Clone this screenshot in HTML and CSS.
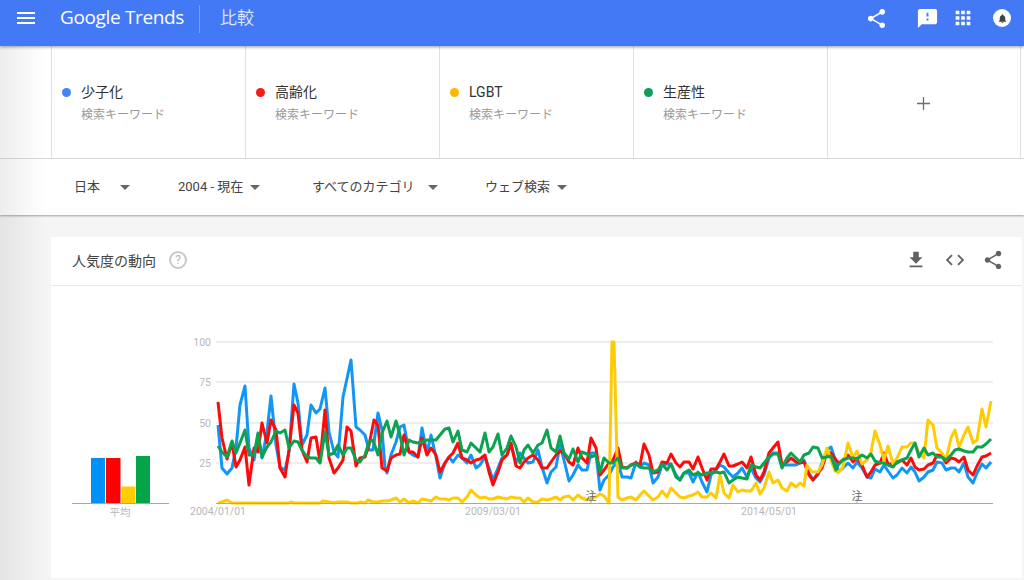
FILE: index.html
```html
<!DOCTYPE html>
<html lang="ja">
<head>
<meta charset="utf-8">
<title>比較 - Google Trends</title>
<link rel="stylesheet" href="styles.css">
</head>
<body>
<div class="edge-shade"></div>
<header class="topbar">
  <svg class="icon menu-icon" viewBox="0 0 24 24"><path d="M3 18h18v-2H3v2zm0-5h18v-2H3v2zm0-7v2h18V6H3z"/></svg>
  <div class="logo">Google Trends</div>
  <div class="divider"></div>
  <div class="page-title">比較</div>
  <div class="top-actions">
    <svg class="icon share-top" viewBox="0 0 24 24"><path d="M18 16.08c-.76 0-1.44.3-1.96.77L8.91 12.7c.05-.23.09-.46.09-.7s-.04-.47-.09-.7l7.05-4.11c.54.5 1.25.81 2.04.81 1.66 0 3-1.34 3-3s-1.34-3-3-3-3 1.34-3 3c0 .24.04.47.09.7L8.04 9.81C7.5 9.31 6.79 9 6 9c-1.66 0-3 1.34-3 3s1.34 3 3 3c.79 0 1.5-.31 2.04-.81l7.12 4.16c-.05.21-.08.43-.08.65 0 1.61 1.31 2.92 2.92 2.92 1.61 0 2.92-1.31 2.92-2.92s-1.31-2.92-2.92-2.92z"/></svg>
    <svg class="icon feedback" viewBox="0 0 24 24"><path d="M20 2H4c-1.1 0-1.99.9-1.99 2L2 22l4-4h14c1.1 0 2-.9 2-2V4c0-1.1-.9-2-2-2zm-7 12h-2v-2h2v2zm0-4h-2V6h2v4z"/></svg>
    <svg class="icon apps" viewBox="0 0 24 24"><path d="M4 8h4V4H4v4zm6 12h4v-4h-4v4zm-6 0h4v-4H4v4zm0-6h4v-4H4v4zm6 0h4v-4h-4v4zm6-10v4h4V4h-4zm-6 4h4V4h-4v4zm6 6h4v-4h-4v4zm0 6h4v-4h-4v4z"/></svg>
    <div class="bell-circle"><svg viewBox="0 0 24 24"><path d="M12 22c1.1 0 2-.9 2-2h-4c0 1.1.89 2 2 2zm6-6v-5c0-3.07-1.64-5.64-4.5-6.32V4c0-.83-.67-1.5-1.5-1.5s-1.5.67-1.5 1.5v.68C7.63 5.36 6 7.92 6 11v5l-2 2v1h16v-1l-2-2z"/></svg></div>
  </div>
</header>

<section class="terms">
  <div class="term"><span class="dot dot-blue"></span><div><div class="term-name">少子化</div><div class="term-sub">検索キーワード</div></div></div>
  <div class="term"><span class="dot dot-red"></span><div><div class="term-name">高齢化</div><div class="term-sub">検索キーワード</div></div></div>
  <div class="term"><span class="dot dot-yellow"></span><div><div class="term-name">LGBT</div><div class="term-sub">検索キーワード</div></div></div>
  <div class="term"><span class="dot dot-green"></span><div><div class="term-name">生産性</div><div class="term-sub">検索キーワード</div></div></div>
  <div class="term term-add">
    <svg viewBox="0 0 14 14"><path d="M6.3 0h1.4v6.3H14v1.4H7.7V14H6.3V7.7H0V6.3h6.3z"/></svg>
  </div>
</section>

<nav class="filters">
  <div class="filter f-geo"><span>日本</span><i class="caret"></i></div>
  <div class="filter f-time"><span>2004 - 現在</span><i class="caret"></i></div>
  <div class="filter f-cat"><span>すべてのカテゴリ</span><i class="caret"></i></div>
  <div class="filter f-web"><span>ウェブ検索</span><i class="caret"></i></div>
</nav>

<main class="card">
  <div class="card-head">
    <h2 class="card-title">人気度の動向</h2>
    <span class="help">?</span>
    <div class="card-actions">
      <svg class="tool" viewBox="0 0 24 24"><path d="M19 9h-4V3H9v6H5l7 7 7-7zM5 18v2h14v-2H5z"/></svg>
      <svg class="tool" viewBox="0 0 24 24"><path d="M9.4 16.6L4.8 12l4.6-4.6L8 6l-6 6 6 6 1.4-1.4zm5.2 0l4.6-4.6-4.6-4.6L16 6l6 6-6 6-1.4-1.4z"/></svg>
      <svg class="tool" viewBox="0 0 24 24"><path d="M18 16.08c-.76 0-1.44.3-1.96.77L8.91 12.7c.05-.23.09-.46.09-.7s-.04-.47-.09-.7l7.05-4.11c.54.5 1.25.81 2.04.81 1.66 0 3-1.34 3-3s-1.34-3-3-3-3 1.34-3 3c0 .24.04.47.09.7L8.04 9.81C7.5 9.31 6.79 9 6 9c-1.66 0-3 1.34-3 3s1.34 3 3 3c.79 0 1.5-.31 2.04-.81l7.12 4.16c-.05.21-.08.43-.08.65 0 1.61 1.31 2.92 2.92 2.92 1.61 0 2.92-1.31 2.92-2.92s-1.31-2.92-2.92-2.92z"/></svg>
    </div>
  </div>
  <div class="card-body">
    <svg class="avg-chart" viewBox="71 330 100 190">
      <rect class="fill-blue" x="91" y="458" width="14" height="45"/>
      <rect class="fill-red" x="106" y="458" width="14.5" height="45"/>
      <rect class="fill-yellow" x="121.500" y="486.500" width="14" height="16.500"/>
      <rect class="fill-green" x="136" y="456" width="14" height="47"/>
      <line class="axis" x1="72" y1="503.500" x2="169" y2="503.500"/>
      <text class="axis-label" x="120" y="516" text-anchor="middle">平均</text>
    </svg>
    <svg class="trend-chart" viewBox="180 330 830 190">
      <line class="grid" x1="216" y1="342" x2="993" y2="342"/>
      <line class="grid" x1="216" y1="382" x2="993" y2="382"/>
      <line class="grid" x1="216" y1="423" x2="993" y2="423"/>
      <line class="grid" x1="216" y1="463" x2="993" y2="463"/>
      <text class="axis-label" x="211" y="346" text-anchor="end">100</text>
      <text class="axis-label" x="211" y="386" text-anchor="end">75</text>
      <text class="axis-label" x="211" y="427" text-anchor="end">50</text>
      <text class="axis-label" x="211" y="467" text-anchor="end">25</text>
      <polyline class="series s-blue" points="218,425 222,468 227,474 232,468 236,448 240,405 245,386 249,448 254,460 258,435 262,458 267,432 271,396 276,445 280,467 285,470 289,452 294,384 298,403 302,445 307,435 311,405 316,413 320,409 325,388 329,432 334,452 338,457 343,397 351,360 356,427 360,430 365,435 369,450 373,450 378,413 382,430 385,468 387,473 391,455 396,442 400,427 404,425 409,452 413,455 418,457 422,428 427,453 431,435 436,457 440,478 445,463 449,457 453,462 458,455 462,458 467,463 471,455 476,468 480,465 485,457 489,468 493,480 498,468 502,458 507,455 511,445 516,463 520,453 524,458 528,463 533,462 538,450 542,467 547,483 551,472 556,467 560,445 564,460 569,481 573,475 578,465 582,470 587,470 591,453 596,453 600,490 604,480 609,475 613,467 618,462 622,477 627,477 631,478 636,462 640,467 644,463 649,465 653,483 658,477 662,465 667,464 671,464 676,475 680,480 684,473 689,473 693,482 698,472 702,482 707,492 711,475 716,470 720,465 724,467 729,473 733,477 738,473 742,468 747,477 751,468 756,478 760,482 764,475 769,458 773,453 778,453 782,465 787,465 791,465 796,465 800,463 804,460 809,473 813,480 818,475 822,463 827,450 831,447 836,462 838,472 843,468 848,463 853,468 857,462 862,468 867,477 871,478 875,469 880,472 884,465 888,471 893,478 897,475 902,468 907,473 911,467 915,472 919,481 924,477 928,472 933,470 937,462 942,463 946,470 951,468 955,468 959,472 964,463 968,477 973,483 977,473 982,464 986,468 991,462"/>
      <polyline class="series s-red" points="218,402 222,438 227,459 232,443 236,467 240,460 245,447 249,485 254,448 258,452 262,423 267,443 271,420 276,430 280,468 285,477 289,450 294,405 298,413 302,450 307,462 311,438 316,437 320,462 325,410 329,458 334,473 338,468 343,460 347,427 351,431 356,466 360,458 365,457 369,445 374,420 378,425 382,468 387,471 391,458 396,455 400,454 404,435 409,452 413,452 418,457 422,438 427,455 431,448 436,455 440,472 445,463 449,457 453,453 458,443 462,458 467,460 471,463 476,460 480,459 485,455 489,472 493,485 498,472 502,460 507,455 511,443 516,466 520,468 524,462 528,458 533,455 538,460 542,468 547,468 551,462 556,455 560,451 564,453 569,462 573,465 578,448 582,458 587,463 591,438 596,448 600,475 604,470 609,463 613,460 618,448 622,467 627,468 631,465 636,463 640,465 644,444 649,455 653,473 658,472 662,462 667,463 671,454 676,463 680,467 684,462 689,462 693,469 698,457 702,468 707,480 711,469 716,469 720,462 724,454 729,466 733,466 738,464 742,462 747,468 751,457 756,475 760,480 764,472 769,453 773,448 778,442 782,465 787,462 791,458 796,462 800,463 804,462 809,475 813,480 818,473 822,468 827,452 831,453 836,460 839,463 843,460 848,455 853,462 857,458 862,465 867,477 871,472 875,465 880,463 884,453 888,464 893,464 897,463 902,460 907,465 911,458 915,467 919,470 924,469 928,465 933,463 937,455 942,456 946,463 951,458 955,459 959,462 964,457 968,470 973,475 977,466 982,457 986,456 991,453"/>
      <polyline class="series s-yellow" points="218,503 222,502 227,500 232,503 289,503 291,502 294,503 320,503 323,501 329,502 334,503 338,502 347,502 351,503 358,503 361,502 365,503 368,500 373,502 378,502 382,501 387,501 391,500 396,498 400,502 404,499 409,503 413,501 418,503 422,499 427,500 431,501 436,497 440,499 445,499 449,500 453,498 458,498 462,502 467,497 471,490 476,495 480,498 485,497 489,499 493,499 498,497 502,498 507,499 511,497 516,498 520,498 524,502 528,498 533,502 538,502 542,499 547,500 551,499 556,497 560,500 564,497 569,496 573,500 578,495 582,498 587,500 591,498 596,497 600,494 604,496 609,503 612,342 614,342 618,497 622,500 627,498 631,497 636,500 640,495 644,491 649,496 653,500 658,497 662,491 667,497 671,488 676,493 680,497 684,498 689,496 693,495 698,492 702,497 707,497 711,493 716,498 720,475 724,493 729,498 733,485 738,492 742,490 747,491 751,491 756,483 760,494 764,488 769,472 773,483 778,480 782,488 787,491 791,483 796,487 800,483 804,486 807,465 812,472 818,472 822,465 827,448 831,460 835,471 839,472 843,467 848,443 853,458 857,451 862,464 867,460 871,452 875,431 880,445 884,460 888,446 893,464 897,458 902,447 907,447 911,443 915,443 919,453 924,458 928,420 933,425 937,448 942,453 946,460 951,438 955,430 959,447 964,435 968,427 973,443 977,440 982,409 986,427 991,401"/>
      <polyline class="series s-green" points="218,446 222,452 227,457 232,441 236,453 240,443 245,430 249,455 254,455 258,433 262,457 267,447 271,442 276,431 280,433 285,430 289,448 294,441 298,442 302,450 307,457 311,458 316,458 320,463 325,432 329,455 334,453 338,445 343,455 347,448 351,448 356,460 360,462 365,455 369,442 373,440 378,455 382,433 387,421 391,437 396,421 400,435 404,455 409,440 413,442 418,443 422,442 427,440 431,440 436,440 440,435 445,429 449,428 453,442 458,431 462,450 467,452 471,443 476,448 480,452 485,433 489,452 493,447 498,434 502,455 507,448 511,436 516,447 520,463 524,450 528,445 533,453 538,445 542,443 547,430 551,448 556,452 560,436 564,453 569,459 573,449 578,462 582,452 587,454 591,457 596,455 600,472 604,458 609,463 613,463 618,458 622,468 627,468 631,465 636,464 640,467 644,468 649,468 653,472 658,470 662,464 667,470 671,464 676,477 680,480 684,473 689,470 693,475 698,473 702,475 707,473 711,473 716,472 720,473 724,472 729,483 733,480 738,477 742,478 747,479 751,465 756,467 760,468 764,463 769,457 773,454 778,454 782,468 787,458 791,453 796,458 800,462 804,455 809,453 813,447 818,448 822,458 827,457 831,456 836,470 838,465 843,460 848,458 853,458 857,459 862,455 867,458 871,454 875,461 880,463 884,463 888,465 893,467 897,462 902,460 907,458 911,450 915,443 919,457 924,448 928,455 933,453 937,457 942,457 946,460 951,455 955,450 959,449 964,451 968,452 973,452 977,447 982,447 986,444 991,439"/>
      <line class="axis" x1="216" y1="503.500" x2="993" y2="503.500"/>
      <line class="note-tick" x1="591" y1="498" x2="591" y2="503"/>
      <line class="note-tick" x1="857" y1="498" x2="857" y2="503"/>
      <text class="note" x="591" y="500" text-anchor="middle">注</text>
      <text class="note" x="857" y="500" text-anchor="middle">注</text>
      <text class="axis-label" x="218" y="515" text-anchor="middle">2004/01/01</text>
      <text class="axis-label" x="493" y="515" text-anchor="middle">2009/03/01</text>
      <text class="axis-label" x="769" y="515" text-anchor="middle">2014/05/01</text>
    </svg>
  </div>
</main>
</body>
</html>
```
FILE: styles.css
```css
* { box-sizing: border-box; }
html, body { margin: 0; height: 580px; overflow: hidden; }
body {
  background: #f5f5f5;
  font-family: Roboto, "Noto Sans CJK JP", sans-serif;
  color: #3c4043;
  position: relative;
}
.edge-shade {
  position: absolute;
  left: 0; top: 46px; bottom: 0;
  width: 45px;
  background: linear-gradient(to right, rgba(0,0,0,.07), rgba(0,0,0,0));
  pointer-events: none;
  z-index: 3;
}
.topbar {
  height: 46px;
  background: #4379f5;
  box-shadow: 0 1px 3px rgba(0,0,0,.4);
  display: flex;
  align-items: flex-start;
  position: relative;
  z-index: 2;
  color: #fff;
}
.icon { fill: #fff; display: block; }
.menu-icon { width: 24px; height: 24px; margin: 6px 0 0 14px; }
.logo {
  margin-left: 22px;
  width: 125px;
  font-family: "Open Sans", sans-serif;
  font-size: 19px;
  line-height: 34px;
  letter-spacing: -.35px;
  white-space: nowrap;
}
.divider { width: 1px; height: 28px; margin: 5px 0 0 14px; background: rgba(255,255,255,.28); }
.page-title {
  margin-left: 20px;
  font-family: "Noto Sans CJK JP", sans-serif;
  font-size: 17px;
  line-height: 34px;
  color: rgba(255,255,255,.82);
}
.top-actions { margin-left: auto; display: flex; align-items: center; height: 36px; padding-right: 13px; }
.share-top { width: 23px; height: 23px; margin-right: 28px; }
.feedback { width: 23px; height: 23px; margin-right: 13px; }
.apps { width: 22px; height: 22px; margin-right: 19px; }
.bell-circle {
  width: 18px; height: 18px;
  border-radius: 50%;
  background: #fff;
  display: flex; align-items: center; justify-content: center;
}
.bell-circle svg { width: 11px; height: 11px; fill: #424242; display: block; }

.terms {
  height: 113px;
  background: #fff;
  border-bottom: 1px solid #e0e0e0;
  padding: 0 0 0 51px;
  display: flex;
}
.term {
  width: 194px;
  border-left: 1px solid #e0e0e0;
  display: flex;
  align-items: flex-start;
  padding: 36px 0 0 10px;
}
.term-add {
  border-right: 1px solid #e0e0e0;
  padding: 0;
  align-items: center;
  justify-content: center;
}
.term-add svg { width: 13px; height: 13px; fill: #6e6e6e; display: block; margin: 2px 2px 0 0; }
.dot { width: 9px; height: 9px; border-radius: 50%; margin: 6px 10px 0 0; flex: none; }
.dot-blue { background: #4285f4; }
.dot-red { background: #f01d1d; }
.dot-yellow { background: #fbb606; }
.dot-green { background: #0f9d58; }
.term-name { font-size: 14px; line-height: 20px; color: #333; }
.term-sub { font-size: 12px; line-height: 18px; margin-top: 4px; color: #9a9a9a; }

.filters {
  height: 56px;
  background: #fff;
  box-shadow: 0 1px 2px rgba(0,0,0,.35);
  padding-left: 74px;
  display: flex;
  align-items: center;
  font-size: 13px;
  color: #444;
  position: relative;
}
.filter { display: flex; align-items: center; }
.filter span { padding-bottom: 4px; }
.caret {
  width: 0; height: 0;
  border-left: 5px solid transparent;
  border-right: 5px solid transparent;
  border-top: 5px solid #666;
}
.f-geo { width: 104px; }
.f-geo .caret { margin-left: 20px; }
.f-time { width: 134px; }
.f-time .caret { margin-left: 7px; }
.f-cat { width: 173px; }
.f-cat .caret { margin-left: 13px; }
.f-web .caret { margin-left: 7px; }

.card {
  margin: 22px 2px 0 51px;
  height: 341px;
  background: #fff;
}
.card-head {
  height: 49px;
  border-bottom: 1px solid #e8e8e8;
  display: flex;
  align-items: center;
  padding: 0 18px 2px 21px;
}
.card-title { margin: 0; font-size: 14px; font-weight: 400; color: #444; }
.help {
  width: 18px; height: 18px;
  margin-left: 13px;
  border: 2px solid #c9c9c9;
  border-radius: 50%;
  font-size: 12px;
  line-height: 14px;
  text-align: center;
  color: #b5b5b5;
}
.card-actions { margin-left: auto; display: flex; gap: 17px; align-items: center; }
.tool { width: 22px; height: 22px; fill: #616161; display: block; }
.tool:last-child { margin-left: -1px; }
.card-body { display: flex; padding: 44px 0 0 20px; }
.avg-chart { width: 100px; height: 190px; flex: none; display: block; }
.trend-chart { width: 830px; height: 190px; margin-left: 9px; flex: none; display: block; }
.fill-blue { fill: #0091f7; }
.fill-red { fill: #ff0000; }
.fill-yellow { fill: #ffcc00; }
.fill-green { fill: #04a549; }
.grid { stroke: #e9e9e9; stroke-width: 1.3; }
.axis { stroke: #a8a8a8; stroke-width: 1; }
.axis-label { font-size: 10.500px; fill: #b8b8b8; font-family: Roboto, "Noto Sans CJK JP", sans-serif; }
.series { fill: none; stroke-width: 3; stroke-linejoin: round; }
.s-blue { stroke: #1296f5; }
.s-red { stroke: #ff0a0a; }
.s-yellow { stroke: #ffcb05; }
.s-green { stroke: #0ba34f; }
.note { font-size: 11px; fill: #666; font-family: "Noto Sans CJK JP", sans-serif; }
.note-tick { stroke: #aaa; stroke-width: 1; }
```
